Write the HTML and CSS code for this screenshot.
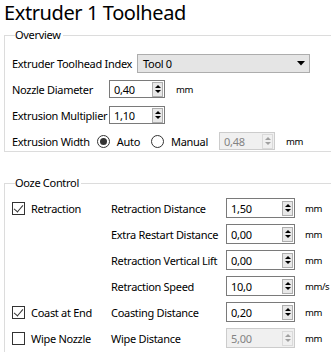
FILE: index.html
```html
<!DOCTYPE html>
<html lang="en">
<head>
    <meta charset="UTF-8">
    <title>Extruder 1 Toolhead</title>
    <link rel="stylesheet" href="styles.css">
</head>
<body>
    <h1 class="title">Extruder 1 Toolhead</h1>

    <fieldset class="group overview">
        <legend>Overview</legend>
        <div class="row">
            <span class="label label-index">Extruder Toolhead Index</span>
            <div class="combo">
                <span>Tool 0</span>
                <svg class="combo-arrow" width="8" height="5" viewBox="0 0 8 5"><path d="M0 0H8L4 4.5Z" fill="#000"/></svg>
            </div>
        </div>
        <div class="row">
            <span class="label label-overview">Nozzle Diameter</span>
            <div class="spin spin-small">
                <span class="spin-value">0,40</span>
                <span class="spin-btn"><span class="up"></span><span class="down"></span></span>
            </div>
            <span class="unit">mm</span>
        </div>
        <div class="row">
            <span class="label label-overview">Extrusion Multiplier</span>
            <div class="spin spin-small">
                <span class="spin-value">1,10</span>
                <span class="spin-btn"><span class="up"></span><span class="down"></span></span>
            </div>
        </div>
        <div class="row">
            <span class="label label-width">Extrusion Width</span>
            <span class="radio checked"></span>
            <span class="radio-text">Auto</span>
            <span class="radio"></span>
            <span class="radio-text">Manual</span>
            <div class="spin spin-small disabled">
                <span class="spin-value">0,48</span>
                <span class="spin-btn"><span class="up"></span><span class="down"></span></span>
            </div>
            <span class="unit">mm</span>
        </div>
    </fieldset>

    <fieldset class="group ooze">
        <legend>Ooze Control</legend>
        <div class="ooze-grid">
            <label class="check"><span class="box on"></span>Retraction</label>
            <span class="label">Retraction Distance</span>
            <div class="spin">
                <span class="spin-value">1,50</span>
                <span class="spin-btn"><span class="up"></span><span class="down"></span></span>
            </div>
            <span class="unit">mm</span>

            <span></span>
            <span class="label">Extra Restart Distance</span>
            <div class="spin">
                <span class="spin-value">0,00</span>
                <span class="spin-btn"><span class="up"></span><span class="down"></span></span>
            </div>
            <span class="unit">mm</span>

            <span></span>
            <span class="label">Retraction Vertical Lift</span>
            <div class="spin">
                <span class="spin-value">0,00</span>
                <span class="spin-btn"><span class="up"></span><span class="down"></span></span>
            </div>
            <span class="unit">mm</span>

            <span></span>
            <span class="label">Retraction Speed</span>
            <div class="spin">
                <span class="spin-value">10,0</span>
                <span class="spin-btn"><span class="up"></span><span class="down"></span></span>
            </div>
            <span class="unit">mm/s</span>

            <label class="check"><span class="box on"></span>Coast at End</label>
            <span class="label">Coasting Distance</span>
            <div class="spin">
                <span class="spin-value">0,20</span>
                <span class="spin-btn"><span class="up"></span><span class="down"></span></span>
            </div>
            <span class="unit">mm</span>

            <label class="check"><span class="box"></span>Wipe Nozzle</label>
            <span class="label">Wipe Distance</span>
            <div class="spin disabled">
                <span class="spin-value">5,00</span>
                <span class="spin-btn"><span class="up"></span><span class="down"></span></span>
            </div>
            <span class="unit">mm</span>
        </div>
    </fieldset>
</body>
</html>
```

FILE: styles.css
```css
body {
    margin: 0;
    background-color: #fff;
    color: #000;
    font-family: "Noto Sans", "Open Sans", sans-serif;
    font-size: 11px;
    letter-spacing: -0.3px;
    white-space: nowrap;
    overflow: hidden;
}
.title {
    margin: 0;
    padding: 0 0 0 4px;
    height: 28px;
    font-size: 20px;
    letter-spacing: -0.4px;
    font-weight: normal;
    line-height: 26px;
}
.group {
    margin: 0 -10px 0 4px;
    padding: 0 0 0 7px;
    border: 1px solid #dcdcdc;
}
.group legend {
    margin-left: 3px;
    padding: 0 2px 0 0;
    line-height: 14px;
    margin-bottom: -7px;
}
.overview {
    height: 124px;
    padding-top: 15px;
    box-sizing: border-box;
}
.ooze {
    margin-top: 24px;
    padding-top: 12px;
    height: 200px;
}
.row {
    display: flex;
    align-items: center;
    height: 26px;
}
.label {
    flex-shrink: 0;
}
.label-index {
    width: 125px;
}
.label-overview {
    width: 97px;
}
.label-width {
    margin-right: 7px;
}
.combo {
    display: flex;
    align-items: center;
    justify-content: space-between;
    box-sizing: border-box;
    width: 173px;
    height: 19px;
    padding: 0 4px 0 5px;
    background-color: #e5e5e5;
    border: 1px solid #adadad;
}
.combo-arrow {
    display: block;
}
.spin {
    display: flex;
    align-items: center;
    justify-content: space-between;
    box-sizing: border-box;
    width: 69px;
    height: 20px;
    padding: 0 1px 0 4px;
    border: 1px solid #7a7a7a;
    background-color: #fff;
}
.spin-small {
    width: 56px;
    height: 18px;
}
.spin-btn {
    display: flex;
    flex-direction: column;
    justify-content: center;
    align-items: center;
    gap: 2px;
    box-sizing: border-box;
    width: 11px;
    height: 15px;
    border: 1px solid #adadad;
    background-color: #e8e8e8;
}
.spin-btn .up,
.spin-btn .down {
    width: 0;
    height: 0;
    border-left: 3px solid transparent;
    border-right: 3px solid transparent;
}
.spin-btn .up {
    border-bottom: 3px solid #000;
}
.spin-btn .down {
    border-top: 3px solid #000;
}
.spin.disabled {
    background-color: #f0f0f0;
    border-color: #cccccc;
    color: #838383;
}
.spin.disabled .spin-btn {
    border-color: #dadada;
    background-color: #f0f0f0;
}
.spin.disabled .up {
    border-bottom-color: #a0a0a0;
}
.spin.disabled .down {
    border-top-color: #a0a0a0;
}
.unit {
    margin-left: 11px;
    font-size: 9.5px;
    letter-spacing: -0.4px;
}
.radio {
    flex-shrink: 0;
    box-sizing: border-box;
    width: 13px;
    height: 13px;
    border: 1px solid #333;
    border-radius: 50%;
    position: relative;
}
.radio.checked::after {
    content: "";
    position: absolute;
    top: 2px;
    left: 2px;
    width: 7px;
    height: 7px;
    border-radius: 50%;
    background-color: #333;
}
.radio-text {
    margin: 0 11px 0 7px;
}
.ooze-grid {
    display: grid;
    grid-template-columns: 99px 115px 69px auto;
    grid-auto-rows: 26px;
    align-items: center;
}
.ooze-grid .unit {
    margin-left: 10px;
}
.check {
    display: flex;
    align-items: center;
    gap: 6px;
}
.box {
    box-sizing: border-box;
    width: 13px;
    height: 13px;
    border: 1px solid #333;
    position: relative;
}
.box.on::after {
    content: "";
    position: absolute;
    left: 3px;
    top: 0px;
    width: 4px;
    height: 8px;
    border-right: 1px solid #333;
    border-bottom: 1px solid #333;
    transform: rotate(40deg);
}
```
